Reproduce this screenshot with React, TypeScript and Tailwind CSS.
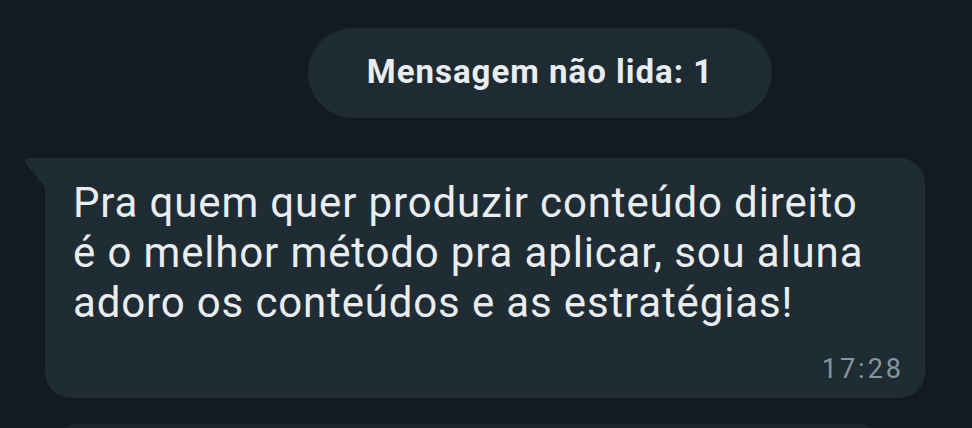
import React from "react";

export default function App() {
  return (
    <div
      className="w-[972px] h-[428px] overflow-hidden bg-[#111b21] flex flex-col"
      style={{ fontFamily: "Roboto, 'Noto Sans', sans-serif" }}
    >
      <div className="shrink-0 flex justify-center pt-[28px] pl-[108px]">
        <div className="h-[90px] w-[464px] rounded-full bg-[#1f2b32] flex items-center justify-center">
          <span className="text-[#e9edef] text-[33px] font-bold tracking-[1px] pb-[2px]">
            Mensagem não lida: 1
          </span>
        </div>
      </div>
      <div className="shrink-0 relative ml-[45px] mt-[40px] w-[880px] h-[240px] bg-[#202c33] rounded-[26px] rounded-tl-none">
        <svg
          className="absolute left-[-22px] top-0"
          width="23"
          height="30"
          viewBox="0 0 23 30"
        >
          <path d="M23 0 L23 30 L3 6 Q0 0 6 0 Z" fill="#202c33" />
        </svg>
        <div className="pl-[28px] pr-[10px] pt-[20px] text-[#e9edef] text-[42px] leading-[50px] tracking-[0.85px] whitespace-nowrap">
          <div>Pra quem quer produzir conteúdo direito</div>
          <div>é o melhor método pra aplicar, sou aluna</div>
          <div>adoro os conteúdos e as estratégias!</div>
        </div>
        <div className="absolute right-[21px] bottom-[14px] text-[#8696a0] text-[27px] leading-[30px] tracking-[3px]">
          17:28
        </div>
      </div>
      <div className="shrink-0 ml-[56px] mt-[26px] w-[824px] h-[60px] bg-[#1c272d] rounded-[22px]" />
    </div>
  );
}
